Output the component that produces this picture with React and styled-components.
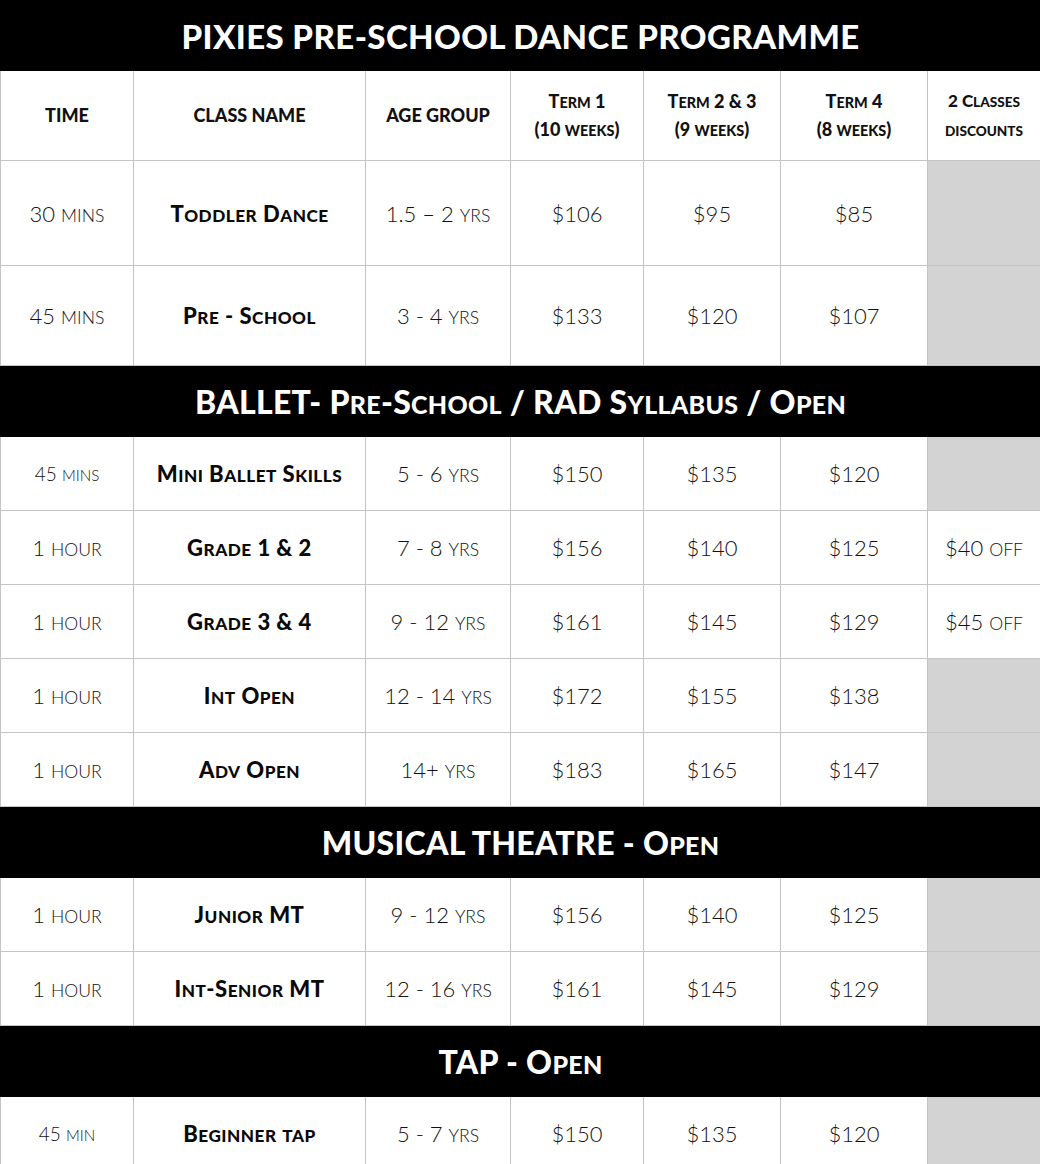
import React from "react"
import styled, { createGlobalStyle } from "styled-components"

const Global = createGlobalStyle`
  body {
    margin: 0;
    background: #ffffff;
    font-family: "Lato", "Liberation Sans", sans-serif;
  }
`;

const Table = styled.table`
  width: 1040px;
  table-layout: fixed;
  border-collapse: collapse;
  color: #1e1e1e;
`;

const Banner = styled.td`
  background: #000;
  color: #fff;
  height: ${p => p.h || 70}px;
  padding: 0;
  text-align: center;
  vertical-align: middle;
  border: 1px solid #000;
`;

const Title = styled.span`
  font-weight: 900;
  font-size: 33px;
  letter-spacing: 0.4px;
`;

const SectionTitle = styled.span`
  display: inline-block;
  font-weight: 900;
  font-size: 32px;
  letter-spacing: 0.3px;
`;

// fake small caps: lowercase letters drawn as smaller capitals
const Low = styled.span`
  font-size: ${p => p.r || 0.8}em;
`;

const SC = ({ children, r }) => {
  const parts = String(children).split(/([a-z]+)/);
  return parts.map((s, i) =>
    /^[a-z]+$/.test(s) ? <Low key={i} r={r}>{s.toUpperCase()}</Low> : s
  );
};

const HeadCell = styled.th`
  height: 89px;
  padding: 0 2px;
  border: 1px solid #c4c4c4;
  border-top: none;
  font-weight: 900;
  font-size: ${p => p.small ? 17 : 18}px;
  line-height: 27px;
  text-align: center;
  vertical-align: middle;
  color: #111;
`;

const Cell = styled.td`
  height: ${p => p.h || 73}px;
  padding: 0 4px;
  border: 1px solid #c4c4c4;
  text-align: center;
  vertical-align: middle;
  background: ${p => p.shade ? "#d4d3d4" : "#fff"};
  font-weight: 300;
  font-size: ${p => p.fs || 22}px;
  color: #111;
  white-space: nowrap;
`;

const NameCell = styled(Cell)`
  font-weight: 900;
  font-size: ${p => p.fs || 22}px;
  letter-spacing: 0.5px;
  color: #0a0a0a;
`;

const cols = [133, 232, 145, 133, 137, 147, 113];

const sections = [
  {
    rows: [
      { h: 104, time: "30 mins", name: "Toddler Dance", age: "1.5 – 2 yrs", t1: "$106", t2: "$95", t4: "$85" },
      { h: 99, time: "45 mins", name: "Pre - School", age: "3 - 4 yrs", t1: "$133", t2: "$120", t4: "$107" },
    ],
  },
  {
    title: "BALLET- Pre-School / RAD Syllabus / Open",
    rows: [
      { time: "45 mins", tfs: 19, name: "Mini Ballet Skills", age: "5 - 6 yrs", t1: "$150", t2: "$135", t4: "$120" },
      { time: "1 hour", name: "Grade 1 & 2", age: "7 - 8 yrs", t1: "$156", t2: "$140", t4: "$125", disc: "$40 off" },
      { time: "1 hour", name: "Grade 3 & 4", age: "9 - 12 yrs", t1: "$161", t2: "$145", t4: "$129", disc: "$45 off" },
      { time: "1 hour", name: "Int Open", age: "12 - 14 yrs", t1: "$172", t2: "$155", t4: "$138" },
      { time: "1 hour", name: "Adv Open", age: "14+ yrs", t1: "$183", t2: "$165", t4: "$147" },
    ],
  },
  {
    title: "MUSICAL THEATRE - Open",
    rows: [
      { time: "1 hour", name: "Junior MT", age: "9 - 12 yrs", t1: "$156", t2: "$140", t4: "$125" },
      { time: "1 hour", name: "Int-Senior MT", age: "12 - 16 yrs", t1: "$161", t2: "$145", t4: "$129" },
    ],
  },
  {
    title: "TAP - Open",
    rows: [
      { time: "45 min", tfs: 19, name: "Beginner tap", age: "5 - 7 yrs", t1: "$150", t2: "$135", t4: "$120" },
    ],
  },
];

const Row = ({ r }) => (
  <tr>
    <Cell h={r.h} fs={r.tfs}><SC>{r.time}</SC></Cell>
    <NameCell h={r.h}><SC r={0.78}>{r.name}</SC></NameCell>
    <Cell h={r.h}><SC>{r.age}</SC></Cell>
    <Cell h={r.h}>{r.t1}</Cell>
    <Cell h={r.h}>{r.t2}</Cell>
    <Cell h={r.h}>{r.t4}</Cell>
    <Cell h={r.h} shade={!r.disc}>{r.disc && <SC>{r.disc}</SC>}</Cell>
  </tr>
);

const App = () => (
  <>
    <Global />
    <Table>
      <colgroup>
        {cols.map((w, i) => <col key={i} style={{ width: w }} />)}
      </colgroup>
      <tbody>
        <tr>
          <Banner colSpan={7} h={69}><Title>PIXIES PRE-SCHOOL DANCE PROGRAMME</Title></Banner>
        </tr>
        <tr>
          <HeadCell>TIME</HeadCell>
          <HeadCell>CLASS NAME</HeadCell>
          <HeadCell>AGE GROUP</HeadCell>
          <HeadCell><SC>Term 1</SC><br /><SC>(10 weeks)</SC></HeadCell>
          <HeadCell><SC>Term 2 & 3</SC><br /><SC>(9 weeks)</SC></HeadCell>
          <HeadCell><SC>Term 4</SC><br /><SC>(8 weeks)</SC></HeadCell>
          <HeadCell small><SC>2 Classes</SC><br /><SC>discounts</SC></HeadCell>
        </tr>
        {sections.map((s, i) => (
          <React.Fragment key={i}>
            {s.title && (
              <tr>
                <Banner colSpan={7}><SectionTitle><SC r={0.78}>{s.title}</SC></SectionTitle></Banner>
              </tr>
            )}
            {s.rows.map((r, j) => <Row key={j} r={r} />)}
          </React.Fragment>
        ))}
      </tbody>
    </Table>
  </>
);

export default App;
